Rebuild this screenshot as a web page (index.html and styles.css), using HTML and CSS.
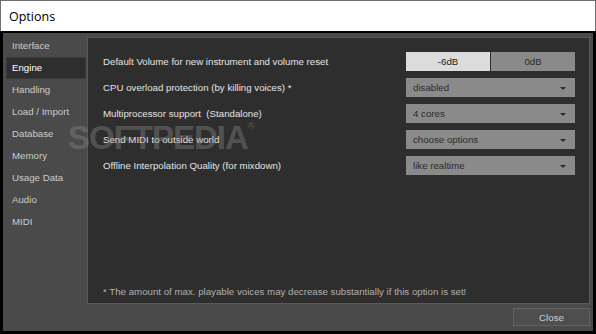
FILE: index.html
```html
<!DOCTYPE html>
<html lang="en">
<head>
    <meta charset="UTF-8">
    <title>Options</title>
    <link rel="stylesheet" href="styles.css">
</head>
<body>
    <div class="window">
        <div class="titlebar">Options</div>
        <div class="client">
            <div class="main">
                <ul class="sidebar">
                    <li>Interface</li>
                    <li class="active">Engine</li>
                    <li>Handling</li>
                    <li>Load / Import</li>
                    <li>Database</li>
                    <li>Memory</li>
                    <li>Usage Data</li>
                    <li>Audio</li>
                    <li>MIDI</li>
                </ul>
                <div class="panel">
                    <div class="row">
                        <span class="label">Default Volume for new instrument and volume reset</span>
                        <div class="toggle">
                            <span class="on">-6dB</span>
                            <span>0dB</span>
                        </div>
                    </div>
                    <div class="row">
                        <span class="label">CPU overload protection (by killing voices) *</span>
                        <div class="select">disabled<span class="caret"></span></div>
                    </div>
                    <div class="row">
                        <span class="label">Multiprocessor support&nbsp; (Standalone)</span>
                        <div class="select">4 cores<span class="caret"></span></div>
                    </div>
                    <div class="row">
                        <span class="label">Send MIDI to outside world</span>
                        <div class="select">choose options<span class="caret"></span></div>
                    </div>
                    <div class="row">
                        <span class="label">Offline Interpolation Quality (for mixdown)</span>
                        <div class="select">like realtime<span class="caret"></span></div>
                    </div>
                    <p class="note">* The amount of max. playable voices may decrease substantially if this option is set!</p>
                </div>
            </div>
            <div class="footer">
                <button class="close">Close</button>
            </div>
            <div class="watermark">SOFTPEDIA<sup>&reg;</sup></div>
        </div>
    </div>
</body>
</html>
```

FILE: styles.css
```css
* {
    box-sizing: border-box;
}

body {
    margin: 0;
    font-family: "Liberation Sans", Arial, sans-serif;
    background: #fff;
}

.window {
    width: 596px;
    height: 334px;
    display: flex;
    flex-direction: column;
}

.titlebar {
    height: 31px;
    border: 1px solid #6e6e6e;
    border-bottom: none;
    background: #fff;
    padding: 7px 0 0 8px;
    font-family: "Open Sans", "Noto Sans", sans-serif;
    font-size: 12.5px;
    color: #000;
}

.client {
    position: relative;
    flex: 1;
    background: #4a4a4a;
    border: 2px solid #000;
    border-left-width: 3px;
    border-right-width: 3px;
    border-bottom-width: 3px;
    display: flex;
    flex-direction: column;
    font-size: 9.7px;
}

.main {
    display: flex;
    height: 271px;
    padding-top: 3px;
}

.sidebar {
    list-style: none;
    margin: 0 2px 0 4px;
    padding: 0;
    width: 78px;
}

.sidebar li {
    height: 20px;
    line-height: 20px;
    margin-bottom: 2px;
    padding-left: 5px;
    color: #cacaca;
}

.sidebar li.active {
    background: #2e2e2e;
    color: #fff;
    outline: 1px solid #3a3a3a;
}

.panel {
    width: 503px;
    margin-top: 1px;
    background: #2e2e2e;
    border: 1px solid #5a5a5a;
    padding: 14px 14px 6px 15px;
    display: flex;
    flex-direction: column;
    gap: 7px;
}

.row {
    display: flex;
    justify-content: space-between;
    align-items: center;
    height: 19px;
}

.label {
    color: #e4e4e4;
}

.toggle {
    display: flex;
    gap: 1px;
    width: 169px;
    height: 19px;
}

.toggle span {
    flex: 1;
    background: #8a8a8a;
    color: #2c2c2c;
    text-align: center;
    line-height: 19px;
}

.toggle span.on {
    background: #dcdcdc;
    color: #1a1a1a;
}

.select {
    position: relative;
    width: 169px;
    height: 19px;
    line-height: 19px;
    padding-left: 7px;
    background: #8a8a8a;
    color: #2c2c2c;
}

.caret {
    position: absolute;
    right: 9px;
    top: 9px;
    width: 0;
    height: 0;
    border-left: 3px solid transparent;
    border-right: 3px solid transparent;
    border-top: 3px solid #2a2a2a;
}

.note {
    margin: auto 0 0;
    color: #b0b0b0;
}

.footer {
    display: flex;
    justify-content: flex-end;
    padding: 4px 3px 0 0;
}

.close {
    width: 77px;
    height: 18px;
    background: #4e4e4e;
    border: 1px solid #626262;
    color: #cfcfcf;
    font-family: "Liberation Sans", Arial, sans-serif;
    font-size: 9.7px;
    padding: 0;
}

.watermark {
    position: absolute;
    left: 65px;
    top: 86px;
    font-family: "Liberation Sans", Arial, sans-serif;
    font-weight: bold;
    font-size: 33px;
    letter-spacing: -1px;
    color: rgba(140, 140, 140, 0.4);
    pointer-events: none;
}

.watermark sup {
    font-size: 9px;
    vertical-align: top;
    position: relative;
    top: 2px;
}
```
